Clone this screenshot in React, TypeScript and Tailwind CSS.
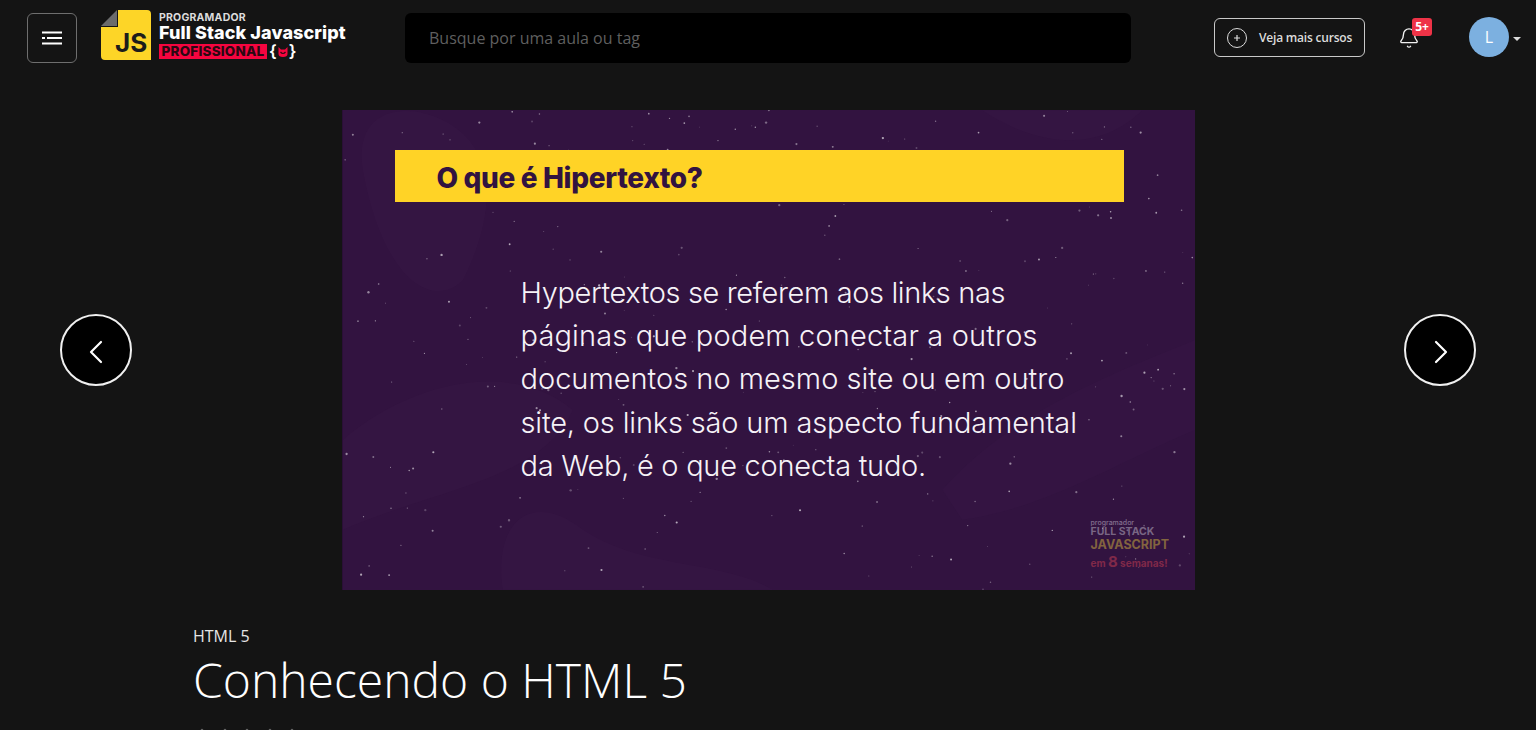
import React from "react";
import { ChevronLeft, ChevronRight, Bell, Star } from "lucide-react";

const STARS: number[][] = [];
let seed = 12345;
const rnd = () => {
  seed = (seed * 16807) % 2147483647;
  return seed / 2147483647;
};
for (let i = 0; i < 300; i++) {
  STARS.push([rnd() * 853, rnd() * 480, 0.4 + rnd() * 0.8, 0.2 + rnd() * 0.45]);
}

function Starfield() {
  return (
    <svg className="absolute inset-0 h-full w-full" viewBox="0 0 853 480">
      <path d="M20 60 C10 0 60 -10 100 10 C160 40 150 110 120 170 C90 200 40 170 20 60Z" fill="#3b1a49" opacity="0.3" />
      <path d="M0 330 C70 270 170 250 230 300 C200 370 90 380 0 420Z" fill="#3b1a49" opacity="0.25" />
      <path d="M160 480 C150 410 190 380 240 420 C300 460 380 450 430 480Z" fill="#3b1a49" opacity="0.3" />
      <path d="M600 380 C670 300 780 260 853 230 L853 320 C780 350 700 400 620 410Z" fill="#3b1a49" opacity="0.22" />
      <path d="M640 0 C700 40 760 40 800 0Z" fill="#3b1a49" opacity="0.25" />
      {STARS.map(([x, y, r, o], i) => (
        <circle key={i} cx={x} cy={y} r={r} fill="#ffffff" opacity={o} />
      ))}
    </svg>
  );
}

function Logo() {
  return (
    <div className="-mt-[5px] ml-6 flex w-[244px] items-start">
      <svg width="50" height="50" viewBox="0 0 50 50" className="shrink-0">
        <path d="M0 16 L16 0 L16 16 Z" fill="#6b6b6b" />
        <path d="M17 0 H46 Q50 0 50 4 V50 H4 Q0 50 0 46 V17 H17 Z" fill="#fdd527" />
        <text x="14" y="42" fontFamily="Inter, sans-serif" fontWeight="700" fontSize="26" fill="#1d1d1b">JS</text>
      </svg>
      <div className="mt-[2px] ml-2 flex flex-col font-['Inter',sans-serif]">
        <span className="text-[10.5px] leading-[12px] font-bold tracking-[0.2px] text-[#dcdcdc]">PROGRAMADOR</span>
        <span className="text-[18px] leading-[18px] font-extrabold tracking-[0.1px] whitespace-nowrap text-white">Full Stack Javascript</span>
        <div className="mt-[2px] flex items-center">
          <span className="flex h-[15px] w-[108px] items-center justify-center bg-[#f5053f] text-[13.5px] font-extrabold tracking-[0.2px] text-[#2a0812]">PROFISSIONAL</span>
          <span className="ml-[2px] text-[17px] leading-[15px] font-semibold text-white">{"{"}</span>
          <svg width="12" height="12" viewBox="0 0 12 12">
            <path d="M1.5 1 L4 3.5 H8 L10.5 1 V8 Q10.5 11 6 11 Q1.5 11 1.5 8 Z" fill="#f5053f" />
            <path d="M3.5 6 Q6 9 8.5 6" stroke="#2a0a14" strokeWidth="1.2" fill="none" />
          </svg>
          <span className="text-[17px] leading-[15px] font-semibold text-white">{"}"}</span>
        </div>
      </div>
    </div>
  );
}

function Header() {
  return (
    <header className="flex h-[75px] items-center pl-[27px]">
      <button className="flex h-[50px] w-[50px] items-center justify-center rounded-md border border-[#6e6e6e]">
        <svg width="20" height="14" viewBox="0 0 20 14">
          <path d="M0 1.5 H20 M0 12.5 H20 M0 7 H3 M5 7 H20" stroke="#fff" strokeWidth="2" />
        </svg>
      </button>
      <Logo />
      <div className="ml-[60px] flex h-[50px] w-[726px] items-center rounded-md bg-black pl-6 font-['Open_Sans',sans-serif] text-base text-[#5f5f5f]">
        Busque por uma aula ou tag
      </div>
      <button className="ml-[83px] flex h-[39px] w-[151px] items-center rounded-md border border-[#c9c9c9] pl-[12px] font-['Open_Sans',sans-serif] text-[12px] font-semibold text-[#dcdcdc]">
        <svg width="20" height="20" viewBox="0 0 20 20" className="shrink-0">
          <circle cx="10" cy="10" r="9.5" stroke="#dcdcdc" fill="none" />
          <path d="M10 7 V13 M7 10 H13" stroke="#dcdcdc" strokeWidth="1.2" />
        </svg>
        <span className="ml-3 tracking-[-0.2px] whitespace-nowrap">Veja mais cursos</span>
      </button>
      <div className="relative ml-8 flex h-[39px] w-6 items-center justify-center">
        <Bell size={22} strokeWidth={1.5} color="#f2f2f2" />
        <span className="absolute top-0 left-[15px] flex h-[18px] w-5 items-center justify-center rounded-[3px] bg-[#ee3347] font-['Open_Sans',sans-serif] text-[12px] font-bold text-white">5+</span>
      </div>
      <div className="-mt-px ml-12 flex h-10 w-10 items-center justify-center rounded-full bg-[#7cb0e0] font-['Open_Sans',sans-serif] text-base text-white">L</div>
      <span className="mt-[3px] ml-1 h-0 w-0 border-x-[4px] border-t-[4px] border-x-transparent border-t-[#dcdcdc]" />
    </header>
  );
}

function Slide() {
  return (
    <div className="relative h-[480px] w-[853px] overflow-hidden border-l border-[#2a0f36] bg-[#321340]">
      <Starfield />
      <div className="relative mt-10 ml-[52px] flex h-[52px] w-[729px] items-center bg-[#ffd326] pt-1 pl-[42px] font-['Inter',sans-serif] text-[28px] font-extrabold tracking-[-0.35px] text-[#321340]">
        O que é Hipertexto?
      </div>
      <p className="relative mt-[69px] ml-[178px] font-['Inter',sans-serif] text-[29px] leading-[43.2px] font-light whitespace-nowrap text-[#f6f2f7]">
        <span className="tracking-[-0.38px]">Hypertextos se referem aos links nas</span>
        <br />
        <span className="tracking-[0.15px]">páginas que podem conectar a outros</span>
        <br />
        <span className="tracking-[0px]">documentos no mesmo site ou em outro</span>
        <br />
        <span className="tracking-[-0.16px]">site, os links são um aspecto fundamental</span>
        <br />
        <span className="tracking-[-0.28px]">da Web, é o que conecta tudo.</span>
      </p>
      <div className="absolute top-[409px] left-[748px] flex flex-col font-['Inter',sans-serif] leading-none font-bold opacity-60">
        <span className="text-[7px] font-medium text-[#b9acc0]">programador</span>
        <span className="mt-px text-[10.5px] text-[#a79db2]">FULL STACK</span>
        <span className="mt-px text-[12.5px] text-[#b89a3f]">JAVASCRIPT</span>
        <span className="mt-[3px] text-[10px] leading-[15px] text-[#b5384f]">
          em <span className="text-[15px]">8</span> semanas!
        </span>
      </div>
    </div>
  );
}

function Arrow({ right }: { right?: boolean }) {
  return (
    <button className="flex h-[72px] w-[72px] items-center justify-center rounded-full border-2 border-[#f0f0f0] bg-black text-white">
      {right ? (
        <ChevronRight size={40} strokeWidth={1.3} className="mt-[3px] ml-px" />
      ) : (
        <ChevronLeft size={40} strokeWidth={1.3} className="mt-[3px] -ml-px" />
      )}
    </button>
  );
}

export default function App() {
  return (
    <div className="h-[730px] overflow-hidden bg-[#141414] font-['Open_Sans',sans-serif] text-white">
      <Header />
      <div className="mt-[35px] flex items-center justify-between px-[60px]">
        <Arrow />
        <Slide />
        <Arrow right />
      </div>
      <div className="mt-[35px] pl-[193px]">
        <div className="text-[16px] leading-[22px] text-[#e6e6e6]">HTML 5</div>
        <h1 className="mt-[2px] text-[48px] leading-[62px] font-light text-white">Conhecendo o HTML 5</h1>
        <div className="mt-[17px] -ml-px flex gap-[2.5px]">
          {[0, 1, 2, 3, 4].map((i) => (
            <Star key={i} size={20} fill="#666666" color="#666666" />
          ))}
        </div>
      </div>
    </div>
  );
}
